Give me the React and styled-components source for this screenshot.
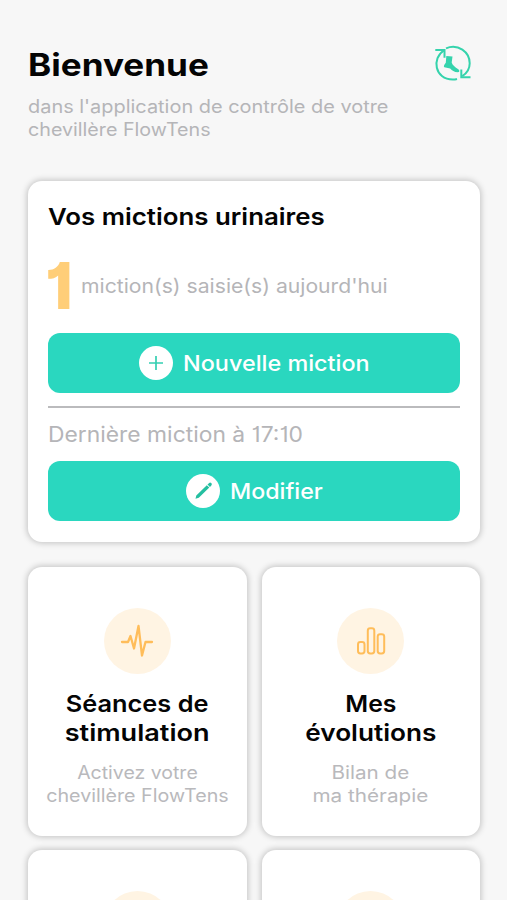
import React from 'react';
import styled, { createGlobalStyle } from 'styled-components';

const GlobalStyle = createGlobalStyle`
  * { box-sizing: border-box; }
  html, body { margin: 0; height: 900px; overflow: hidden; background: #f7f7f7; }
`;

const Screen = styled.main`
  height: 900px;
  overflow: hidden;
  padding: 45px 27px 0 28px;
  background: #f7f7f7;
  color: #040404;
  font-family: Inter, sans-serif;
`;

const Header = styled.header`
  display: flex;
  justify-content: space-between;
  height: 136px;
`;

const Title = styled.h1`
  margin: 0;
  font-size: 31px;
  font-weight: 700;
  line-height: 40px;
`;

/* Widened letterforms; $stretch is the horizontal factor, $room the extra width it needs in a row. */
const Text = styled.span`
  display: block;
  white-space: nowrap;
  margin-right: ${(p) => p.$room || 0}px;
  transform: scaleX(${(p) => p.$stretch});
  transform-origin: ${(p) => (p.$centered ? 'center' : 'left')};
`;

const Subtitle = styled.div`
  margin-top: 10px;
  color: #b5b5b8;
  font-size: 18px;
  line-height: 23px;
`;

const FootLogo = styled.svg`
  width: 40px;
  height: 40px;
  margin: -1px 7px 0 0;
  flex: none;
`;

const Card = styled.section`
  background: #fff;
  border-radius: 14px;
  box-shadow: 0 0 6px 1px rgba(0, 0, 0, 0.22);
`;

const SummaryCard = styled(Card)`
  height: 361px;
  padding: 21px 20px 0;
`;

const SummaryTitle = styled.h2`
  margin: 0;
  font-size: 23.5px;
  font-weight: 600;
  line-height: 30px;
`;

const CountRow = styled.div`
  display: flex;
  align-items: center;
  height: 70px;
  margin-top: 19px;
`;

const Count = styled.span`
  width: 33px;
  margin-left: -3px;
  color: #ffce78;
  font-size: 65px;
  font-weight: 800;
  line-height: 70px;
  font-feature-settings: 'cv01';
`;

const CountLabel = styled.div`
  margin-left: 3px;
  color: #b5b5b8;
  font-size: 20px;
  line-height: 26px;
`;

const ActionButton = styled.button`
  display: flex;
  align-items: center;
  justify-content: center;
  gap: 10px;
  width: 100%;
  height: 60px;
  margin-top: ${(p) => p.$top}px;
  padding: 0;
  border: 0;
  border-radius: 12px;
  background: #2ad7bf;
  color: #fff;
  font: 500 21.5px/30px Inter, sans-serif;
`;

const ButtonIcon = styled.svg`
  width: 34px;
  height: 34px;
  flex: none;
`;

const Divider = styled.hr`
  height: 2px;
  margin: 13px 0 0;
  border: 0;
  background: #bbbbbd;
`;

const LastEntry = styled.div`
  margin-top: 12px;
  color: #b5b5b8;
  font-size: 21px;
  line-height: 30px;
  font-feature-settings: 'cv01';
`;

const TileGrid = styled.div`
  display: grid;
  grid-template-columns: 1fr 1fr;
  grid-auto-rows: 269px;
  gap: 14px 15px;
  margin-top: 25px;
`;

const Tile = styled(Card)`
  display: flex;
  flex-direction: column;
  align-items: center;
  padding-top: 41px;
  text-align: center;
`;

const TileIcon = styled.div`
  display: grid;
  place-items: center;
  width: 67px;
  height: 66px;
  border-radius: 50%;
  background: #fff4e3;
`;

const TileTitle = styled.h2`
  margin: 15px 0 0;
  font-size: 23.5px;
  font-weight: 600;
  line-height: 29px;
`;

const TileText = styled.div`
  margin-top: 14px;
  color: #b9b9bc;
  font-size: 18px;
  line-height: 23px;
`;

const Glyph = styled.svg`
  width: 34px;
  height: 34px;
  fill: none;
  stroke: #ffbd5a;
  stroke-width: 2;
  stroke-linecap: round;
  stroke-linejoin: round;
`;

const PulseGlyph = () => (
  <Glyph viewBox="0 0 34 34">
    <path strokeWidth="2.3" d="M2 18H8L10.5 12L14 24.5L18.5 2L22 31.5L25.5 18H32" />
  </Glyph>
);

const BarsGlyph = () => (
  <Glyph viewBox="0 0 34 34">
    <rect x="4" y="18" width="6.5" height="11.5" rx="2.4" />
    <rect x="13.8" y="4.3" width="6.5" height="25.2" rx="2.4" />
    <rect x="23.7" y="10.2" width="6.5" height="19.3" rx="2.4" />
  </Glyph>
);

const tiles = [
  {
    icon: <PulseGlyph />,
    title: [['Séances de', 1.078], ['stimulation', 1.152]],
    text: [['Activez votre', 1.083], ['chevillère FlowTens', 1.094]],
  },
  {
    icon: <BarsGlyph />,
    title: [['Mes', 1.055], ['évolutions', 1.114]],
    text: [['Bilan de', 1.147], ['ma thérapie', 1.149]],
  },
  { title: [], text: [] },
  { title: [], text: [] },
];

const Lines = ({ items }) =>
  items.map(([line, stretch]) => (
    <Text key={line} $stretch={stretch} $centered>{line}</Text>
  ));

export default function App() {
  return (
    <Screen>
      <GlobalStyle />
      <Header>
        <div>
          <Title><Text $stretch={1.132}>Bienvenue</Text></Title>
          <Subtitle>
            <Text $stretch={1.107}>dans l'application de contrôle de votre</Text>
            <Text $stretch={1.094}>chevillère FlowTens</Text>
          </Subtitle>
        </div>
        <FootLogo viewBox="0 0 40 40" fill="none" stroke="#35d3ac" strokeWidth="2">
          <path d="M11 6.5C-1.5 14 1.5 35.5 19.8 35.6Q22 35.6 24 35" />
          <path d="M13 4.3C25-.8 36.7 8 36.7 19.3C36.7 25 33.5 29.5 29.3 32.2" />
          <path d="M2.3 6H11.5V13.8M28.3 25.5V33.3H37.5" />
          <path d="M13.3 12L19.5 12.5L18.7 18.6C19.5 21.3 22 23.3 25.3 25.2C26.9 26.2 26.7 28.3 24.7 28.3C21.2 28.1 19 26.6 17.2 24.5L11.3 23.3C10.4 22.2 11 21.3 12.8 18.8Z" fill="#35d3ac" stroke="none" />
        </FootLogo>
      </Header>

      <SummaryCard>
        <SummaryTitle><Text $stretch={1.1}>Vos mictions urinaires</Text></SummaryTitle>
        <CountRow>
          <Count>1</Count>
          <CountLabel><Text $stretch={1.058}>miction(s) saisie(s) aujourd'hui</Text></CountLabel>
        </CountRow>
        <ActionButton $top={12}>
          <ButtonIcon viewBox="0 0 34 34">
            <circle cx="17" cy="17" r="17" fill="#fff" />
            <path d="M17 10V24M10 17H24" stroke="#35cfb2" strokeWidth="1.7" />
          </ButtonIcon>
          <Text $stretch={1.088} $room={15}>Nouvelle miction</Text>
        </ActionButton>
        <Divider />
        <LastEntry><Text $stretch={1.088}>Dernière miction à 17:10</Text></LastEntry>
        <ActionButton $top={11}>
          <ButtonIcon viewBox="0 0 34 34">
            <circle cx="17" cy="17" r="17" fill="#fff" />
            <path d="M9.5 24.8L10.3 21.5L20.8 11.2L23.3 13.6L12.8 23.7ZM21.5 10.5L23.2 8.9Q24.2 8.1 25.2 9.1Q26.4 10.2 25.5 11.3L24 12.9Z" fill="#24bfa0" />
          </ButtonIcon>
          <Text $stretch={1.08} $room={7}>Modifier</Text>
        </ActionButton>
      </SummaryCard>

      <TileGrid>
        {tiles.map((tile, i) => (
          <Tile key={i}>
            <TileIcon>{tile.icon}</TileIcon>
            <TileTitle><Lines items={tile.title} /></TileTitle>
            <TileText><Lines items={tile.text} /></TileText>
          </Tile>
        ))}
      </TileGrid>
    </Screen>
  );
}
